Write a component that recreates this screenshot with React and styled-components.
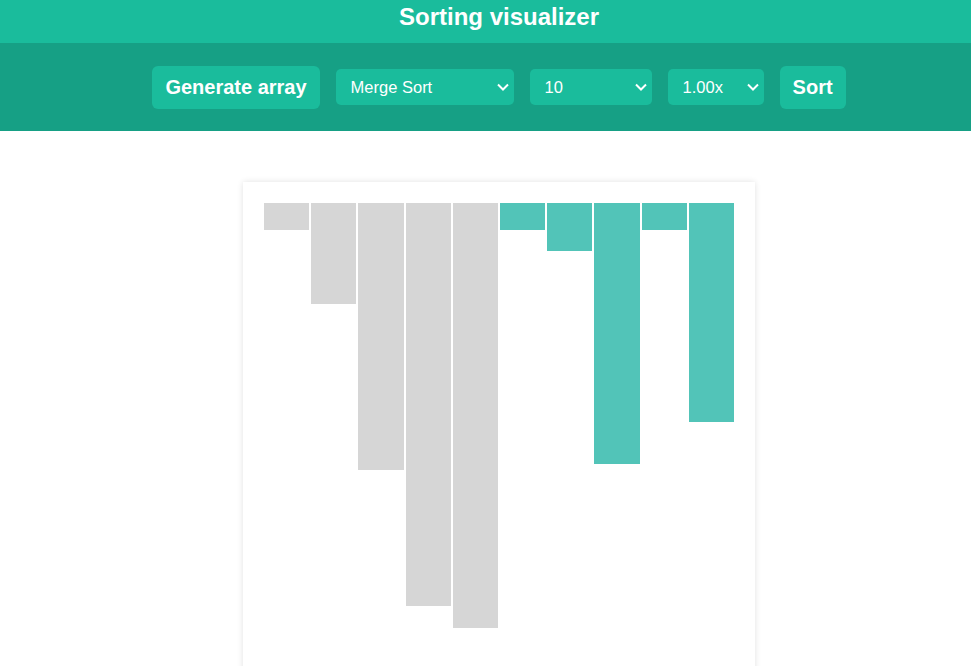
import React from "react";
import styled, { createGlobalStyle } from "styled-components";

const Global = createGlobalStyle`
  html, body { margin: 0; padding: 0; overflow: hidden; background: #fff; }
  body { font-family: "Liberation Sans", Arial, sans-serif; }
`;

const Page = styled.div`
  min-width: 998px;
`;

const TitleBar = styled.header`
  height: 43px;
  background: #1abc9c;
  display: flex;
  align-items: center;
  justify-content: center;
`;

const Title = styled.h1`
  margin: 0;
  color: #fff;
  font-size: 24px;
  font-weight: bold;
  line-height: 1;
  padding-bottom: 9px;
`;

const Toolbar = styled.nav`
  height: 88px;
  background: #16a085;
  display: flex;
  align-items: center;
  justify-content: center;
  gap: 16px;
`;

const Button = styled.button`
  height: 43px;
  padding: 0 13px;
  border: none;
  border-radius: 6px;
  background: #1abc9c;
  color: #fff;
  font-family: "Liberation Sans", Arial, sans-serif;
  font-size: 20px;
  font-weight: bold;
  cursor: pointer;
`;

const SelectWrap = styled.div`
  position: relative;
  width: ${(p) => p.$w}px;
  height: 36px;
`;

const Select = styled.select`
  appearance: none;
  -webkit-appearance: none;
  width: 100%;
  height: 100%;
  border: none;
  border-radius: 5px;
  background: #1abc9c;
  color: #fff;
  font-family: "Liberation Sans", Arial, sans-serif;
  font-size: 16.5px;
  padding: 0 30px 0 15px;
  outline: none;
`;

const Chevron = styled.svg`
  position: absolute;
  right: 5px;
  top: 13px;
  width: 12px;
  height: 10px;
  pointer-events: none;
`;

const Main = styled.main`
  display: flex;
  justify-content: center;
  padding-top: 51px;
`;

const Card = styled.section`
  width: 512px;
  height: 500px;
  box-sizing: border-box;
  padding: 21px 20px;
  background: #fff;
  box-shadow: 0 0 6px rgba(0, 0, 0, 0.12);
  display: flex;
  align-items: flex-start;
`;

const Bar = styled.div`
  flex: 1;
  margin: 0 1px;
  background: ${(p) => (p.$active ? "#52c4b8" : "#d6d6d6")};
`;

const bars = [
  { h: 27 },
  { h: 101 },
  { h: 267 },
  { h: 403 },
  { h: 425 },
  { h: 27, a: true },
  { h: 48, a: true },
  { h: 261, a: true },
  { h: 27, a: true },
  { h: 219, a: true },
];

function Dropdown({ width, value, options }) {
  return (
    <SelectWrap $w={width}>
      <Select defaultValue={value}>
        {options.map((o) => (
          <option key={o}>{o}</option>
        ))}
      </Select>
      <Chevron viewBox="0 0 12 10">
        <path d="M1 2.5 L6 7.5 L11 2.5" fill="none" stroke="#fff" strokeWidth="2" />
      </Chevron>
    </SelectWrap>
  );
}

export default function App() {
  return (
    <Page>
      <Global />
      <TitleBar>
        <Title>Sorting visualizer</Title>
      </TitleBar>
      <Toolbar>
        <Button>Generate array</Button>
        <Dropdown
          width={178}
          value="Merge Sort"
          options={["Merge Sort", "Quick Sort", "Bubble Sort", "Insertion Sort"]}
        />
        <Dropdown width={122} value="10" options={["10", "20", "50", "100"]} />
        <Dropdown width={96} value="1.00x" options={["0.50x", "1.00x", "2.00x"]} />
        <Button>Sort</Button>
      </Toolbar>
      <Main>
        <Card>
          {bars.map((b, i) => (
            <Bar key={i} $active={b.a} style={{ height: b.h }} />
          ))}
        </Card>
      </Main>
    </Page>
  );
}
